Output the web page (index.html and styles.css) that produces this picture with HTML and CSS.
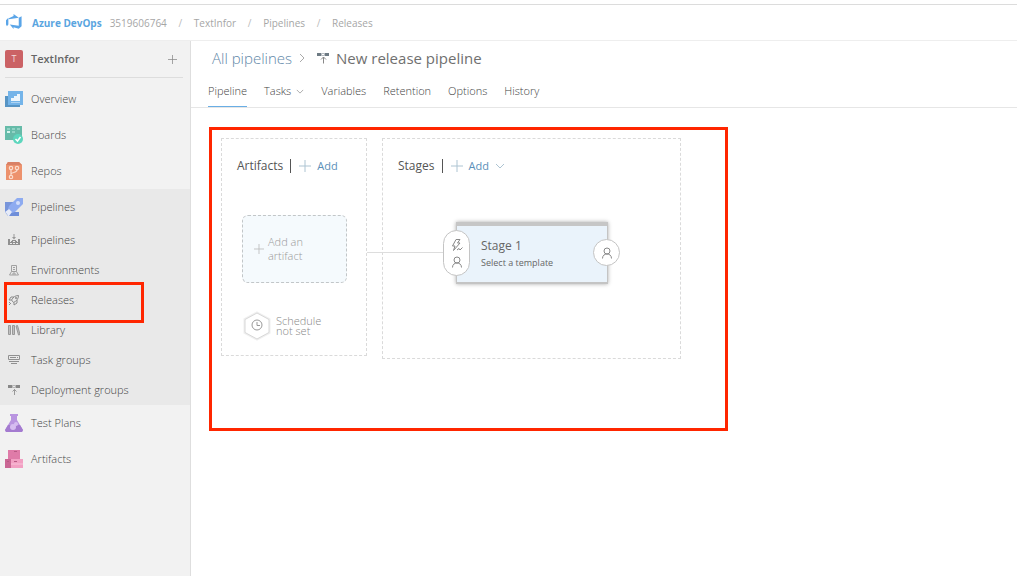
FILE: index.html
```html
<!DOCTYPE html>
<html lang="en">
<head>
<meta charset="utf-8">
<title>New release pipeline - Pipelines</title>
<link rel="stylesheet" href="styles.css">
</head>
<body>
<svg class="defs" aria-hidden="true">
  <symbol id="person" viewBox="0 0 12 12"><circle cx="6" cy="4" r="3"/><path d="M1.500 11.500C1.500 8.500 3.500 7 6 7s4.500 1.500 4.500 4.500"/></symbol>
  <symbol id="servers" viewBox="0 0 12 12"><path d="M0 1h4v3H0zM8 1h4v3H8z" fill="currentColor"/><path d="M4.500 1.500h3v2h-3z" fill="none" stroke="currentColor" stroke-opacity=".5"/></symbol>
  <symbol id="plus" viewBox="0 0 12 12"><path d="M6 0v12M0 6h12"/></symbol>
  <symbol id="chevron" viewBox="0 0 10 6"><path d="M1 1l4 4 4-4"/></symbol>
</svg>
<header class="topbar">
  <a class="brand" href="#">
    <svg class="logo" viewBox="0 0 18 18" aria-hidden="true"><path d="M0 6.500L2.500 4v7L1 13 0 11zM3 4.500L8 2V0l5.500 4L3 5.500zM13.500 4L16.500 2.500V13l-3 2.500L8 14v2l-4-4.800 9.500 1.300z" fill="#5aa5e8"/></svg>
    <span>Azure DevOps</span>
  </a>
  <nav class="crumbs" aria-label="Breadcrumb">
    <a href="#">3519606764</a><span class="slash">/</span>
    <a href="#">TextInfor</a><span class="slash">/</span>
    <a href="#">Pipelines</a><span class="slash">/</span>
    <a href="#">Releases</a>
  </nav>
</header>
<div class="shell">
  <aside class="sidebar">
    <div class="project">
      <span class="avatar">T</span>
      <span class="project-name">TextInfor</span>
      <button class="icon-button" type="button" aria-label="New"><svg class="line" width="9" height="9"><use href="#plus"/></svg></button>
    </div>
    <nav class="menu" aria-label="Project">
      <a class="item" href="#"><svg class="hub" viewBox="0 0 18 18"><path d="M0 6h3v9h12v2H0z" fill="#5794c4"/><path d="M3 1h15v14H3z" fill="#74b4e9"/><path d="M6 8h3v3H6zM9 6h3v5H9zM12 4h3v7h-3z" fill="#edf6fc"/><path d="M6 12h9v1H6z" fill="#aed4f3"/></svg>Overview</a>
      <a class="item" href="#"><svg class="hub" viewBox="0 0 18 18"><path d="M0 0h17v14H0z" fill="#66bba9"/><path d="M2 2h3v2H2zM7 2h3v2H7zM12 2h3v2h-3zM7 5h3v2H7z" fill="#91d3c5"/><path d="M2 5h3v2H2z" fill="#d5f4ed"/><circle cx="13" cy="13" r="5" fill="#5dd6bd"/><path d="M10.500 13l2 2 3-4" fill="none" stroke="#fff" stroke-width="1.500"/></svg>Boards</a>
      <a class="item" href="#"><svg class="hub" viewBox="0 0 18 18"><path d="M3 0h11l3 3v15H1V3z" fill="#ed926d"/><path d="M3 0h11l3 3H1z" fill="#d98166"/><g fill="none" stroke="#fbdccd" stroke-width="1.200"><circle cx="6" cy="6" r="1.700"/><circle cx="12" cy="6" r="1.700"/><circle cx="6" cy="15" r="1.700"/><path d="M6 8v5M12 8c0 3-5 2-6 4"/></g></svg>Repos</a>
      <div class="group">
        <a class="item" href="#"><svg class="hub" viewBox="0 0 18 18"><path d="M0 4h8v14H3l-3-4z" fill="#7895da"/><path d="M3 18l4-4h7v4z" fill="#6f8ed9"/><path d="M18 0h-6L4 8l-1 3 4 4 3-1 8-8z" fill="#8eabf0"/><circle cx="13" cy="5" r="2" fill="#d2defb"/><path d="M0 14l4-3 3 3-3 4H3l-1-2z" fill="#e6ebf8"/></svg>Pipelines</a>
        <a class="item sub" href="#"><svg class="glyph" viewBox="0 0 12 12"><path d="M5.500 0h1v3h1.500L6 5.500 4 3h1.500z" fill="#999"/><path d="M0 5h2v2h2V6h4v1h2V5h2v6H0z" fill="#909090"/><path d="M2 7h1v1H2zM5 7h2v1H5zM9 7h1v1H9zM2 9h2v1H2zM5 9h2v1H5zM8 9h2v1H8z" fill="#eaeaea"/></svg>Pipelines</a>
        <a class="item sub" href="#"><svg class="glyph" viewBox="0 0 12 12"><path d="M3.500 1.500h5v6h-5zM5 3.500h2M5 5.500h2M3.500 7.500L1.500 11h9l-2-3.500M5 11V9h2v2" fill="none" stroke="#a0a0a0"/></svg>Environments</a>
        <a class="item sub marked" href="#"><svg class="glyph" viewBox="0 0 12 12"><path d="M10.500 1.500C7 1.500 5.500 3 3.500 6l2 2.500c3-1.500 5-3.500 5-7zM6 3H3L1 6h2.500M9 6v3l-3 2V8.500M1 11l2-2M1 9l1-1" fill="none" stroke="#8a8a8a"/><circle cx="8" cy="4" r="1" fill="#8a8a8a"/></svg>Releases</a>
        <a class="item sub" href="#"><svg class="glyph" viewBox="0 0 12 12"><path d="M.5 1.500h2v9h-2zM4.500 1.500h2v9h-2zM8 2l1.500-.5 2.500 9-1.500.5z" fill="#c0c0c0" stroke="#999"/></svg>Library</a>
        <a class="item sub" href="#"><svg class="glyph" viewBox="0 0 12 12"><path d="M.5 1.500h11v4H.5z" fill="none" stroke="#909090"/><path d="M2 3.500h6M9 3.500h1M1 7.500h10M3 9.500h6" stroke="#909090"/></svg>Task groups</a>
        <a class="item sub" href="#"><svg class="glyph" viewBox="0 0 12 12" color="#888"><use href="#servers"/><path d="M6.500 5v6M4.500 7.500l2-2 2 2" fill="none" stroke="#999"/></svg>Deployment groups</a>
      </div>
      <a class="item" href="#"><svg class="hub" viewBox="0 0 18 18"><path d="M5 0h8v2h-1v4l6 10-1 2H1l-1-2L6 6V2H5z" fill="#b995e0"/><path d="M3 11h12l3 5-1 2H1l-1-2z" fill="#a47bd0"/><circle cx="8" cy="13" r="3" fill="#d6bdf0"/><circle cx="11" cy="10" r="2" fill="#d6bdf0"/></svg>Test Plans</a>
      <a class="item" href="#"><svg class="hub" viewBox="0 0 18 18"><path d="M3 0h12v9H3z" fill="#df7ba8"/><path d="M0 9h6v9H0z" fill="#ca6794"/><path d="M6 9h12v9H6z" fill="#f2a0c3"/><path d="M9 1h3v1H9zM2 11h2v1H2zM9 11h3v1H9z" fill="#b85b84"/><path d="M6 14h12" stroke="#f9c3da"/></svg>Artifacts</a>
    </nav>
  </aside>
  <main class="main">
    <div class="page-head">
      <h1 class="title">
        <a href="#">All pipelines</a>
        <svg class="sep" viewBox="0 0 6 10"><path d="M1 1l4 4-4 4"/></svg>
        <svg class="glyph" viewBox="0 0 12 12" color="#6d7a83"><use href="#servers"/><path d="M6.500 11.500V5M4 7.500L6.500 5 9 7.500" fill="none" stroke="#888"/></svg>
        <span>New release pipeline</span>
      </h1>
      <nav class="tabs" aria-label="Pipeline">
        <a class="tab active" href="#">Pipeline</a>
        <a class="tab" href="#">Tasks <svg class="line" width="8" height="5"><use href="#chevron"/></svg></a>
        <a class="tab" href="#">Variables</a>
        <a class="tab" href="#">Retention</a>
        <a class="tab" href="#">Options</a>
        <a class="tab" href="#">History</a>
      </nav>
    </div>
    <div class="canvas">
      <section class="panel artifacts">
        <div class="panel-head">
          <h2>Artifacts</h2>
          <button class="add" type="button"><svg class="line" width="12" height="12"><use href="#plus"/></svg>Add</button>
        </div>
        <button class="artifact-card" type="button"><svg class="line" width="10" height="10"><use href="#plus"/></svg><span>Add an artifact</span></button>
        <button class="schedule" type="button">
          <svg class="hexagon" viewBox="0 0 28 30"><path d="M14 2l12 6.500v13L14 28 2 21.500v-13z" fill="#fff" stroke="#f0f0f0" stroke-width="3"/><path d="M14 2l12 6.500v13L14 28 2 21.500v-13z" fill="#fff" stroke="#d8d8d8"/><circle cx="14" cy="14" r="5" fill="none" stroke="#999"/><path d="M14 11v3.500h3" fill="none" stroke="#999"/></svg>
          <span>Schedule not set</span>
        </button>
      </section>
      <section class="panel stages">
        <div class="panel-head">
          <h2>Stages</h2>
          <button class="add" type="button"><svg class="line" width="12" height="12"><use href="#plus"/></svg>Add <svg class="line" width="10" height="6"><use href="#chevron"/></svg></button>
        </div>
        <div class="connector"></div>
        <div class="stage">
          <strong>Stage 1</strong>
          <a href="#">Select a template</a>
          <button class="badge pre" type="button" aria-label="Pre-deployment conditions">
            <svg class="line" width="12" height="13" viewBox="0 0 12 13"><path d="M5 .5h4L6.500 4H9L2.500 11.500 4 7H1.500zM6 11l2-1.500 1 1.500 2.500-2.500"/></svg>
            <svg class="line" width="12" height="12"><use href="#person"/></svg>
          </button>
          <button class="badge post" type="button" aria-label="Post-deployment conditions"><svg class="line" width="12" height="12"><use href="#person"/></svg></button>
        </div>
      </section>
    </div>
  </main>
</div>
</body>
</html>
```
FILE: styles.css
```css
* { box-sizing: border-box; }
body {
  margin: 0;
  min-height: 100vh;
  display: flex;
  flex-direction: column;
  padding-top: 4px;
  background: #fff;
  color: #444;
  font: 300 11px/16px "Open Sans", "Noto Sans", sans-serif;
}
a { color: inherit; text-decoration: none; }
button {
  padding: 0;
  border: 0;
  background: none;
  color: inherit;
  font: inherit;
  text-align: left;
  cursor: pointer;
}
svg { flex: none; }
.defs { position: absolute; width: 0; height: 0; }
.line { fill: none; stroke: currentColor; }

.topbar {
  display: flex;
  align-items: center;
  gap: 8px;
  height: 37px;
  padding: 0 6px;
  border-top: 1px solid #dcdcdc;
  border-bottom: 1px solid #eee;
  font-size: 10px;
}
.brand {
  display: flex;
  align-items: center;
  gap: 9px;
  color: #5aa5e0;
  font-weight: 700;
}
.logo { width: 17px; height: 17px; }
.crumbs { display: flex; color: #a6a6a6; font-weight: 400; }
.slash { width: 27px; text-align: center; color: #bbb; }

.shell { display: flex; flex: 1; }
.sidebar {
  flex: none;
  width: 191px;
  background: #f2f2f2;
  border-right: 1px solid #dedede;
}
.project {
  display: flex;
  align-items: center;
  gap: 8px;
  height: 37px;
  margin: 0 7px 0 5px;
  padding-right: 6px;
  border-bottom: 1px solid #ddd;
}
.avatar {
  width: 18px;
  border-radius: 2px;
  background: #cb6265;
  color: #f4dcdc;
  font-size: 9px;
  font-weight: 400;
  line-height: 18px;
  text-align: center;
}
.project-name { flex: 1; color: #666; font-weight: 600; }
.icon-button { display: flex; color: #888; }
.menu { padding-top: 3px; }
.item {
  position: relative;
  display: flex;
  align-items: center;
  gap: 8px;
  height: 36px;
  padding-left: 5px;
}
.hub { width: 18px; height: 18px; }
.glyph { width: 12px; height: 12px; }
.group { background: #e9e9e9; }
.sub { height: 30px; gap: 11px; padding-left: 8px; }
.marked::after {
  content: "";
  position: absolute;
  inset: -3px 46px -8px 4px;
  border: 3px solid #ff2600;
  z-index: 1;
}

.main { flex: 1; min-width: 0; }
.page-head { border-bottom: 1px solid #e6e6e6; }
.title {
  display: flex;
  align-items: center;
  margin: 0;
  padding: 5px 21px 3px;
  color: #707070;
  font-size: 15px;
  font-weight: 400;
  line-height: 24px;
}
.title a { color: #5f88a8; font-weight: 300; }
.sep {
  width: 6px;
  height: 10px;
  margin: 0 12px 0 7px;
  fill: none;
  stroke: #aaa;
}
.title .glyph { margin-right: 7px; }
.tabs { display: flex; gap: 17px; padding: 0 17px; }
.tab {
  display: flex;
  align-items: center;
  gap: 5px;
  height: 34px;
  padding-top: 3px;
  border-bottom: 1px solid transparent;
}
.tab .line { color: #999; }
.active { border-color: #69aee5; }

.canvas {
  display: flex;
  align-items: flex-start;
  gap: 15px;
  width: 519px;
  min-height: 304px;
  margin: 19px 18px;
  padding: 8px 9px;
  border: 3px solid #ff2600;
}
.panel { border: 1px dashed #dadada; }
.artifacts { width: 146px; padding: 18px 15px 14px; }
.stages {
  position: relative;
  width: 299px;
  padding: 18px 15px 74px;
}
.panel-head { display: flex; align-items: center; height: 18px; }
.panel-head h2 {
  margin: 0;
  padding-right: 7px;
  border-right: 1px solid #555;
  font-size: 12px;
  font-weight: 400;
  line-height: 14px;
  color: #555;
}
.add {
  display: flex;
  align-items: center;
  gap: 6px;
  padding-left: 8px;
  color: #5b8fb9;
  font-weight: 400;
}
.add .line { color: #adc4d2; }
.artifact-card {
  display: flex;
  align-items: center;
  gap: 4px;
  width: 105px;
  height: 68px;
  margin: 40px 5px 28px;
  padding: 0 40px 0 11px;
  border: 1px dashed #c2c6c8;
  border-radius: 6px;
  background: #f5fafd;
  color: #999;
  line-height: 14px;
}
.artifact-card .line { color: #bbb; }
.schedule {
  display: flex;
  align-items: center;
  gap: 5px;
  width: 96px;
  margin-left: 6px;
  color: #888;
  line-height: 10px;
}
.hexagon { width: 28px; height: 30px; }
.connector {
  position: absolute;
  top: 113px;
  left: -16px;
  width: 90px;
  height: 1px;
  background: #ddd;
}
.stage {
  position: relative;
  display: flex;
  flex-direction: column;
  width: 152px;
  height: 62px;
  margin: 47px 0 0 58px;
  padding: 12px 24px 0;
  border: 1px solid #c4c4c4;
  border-top: 4px solid #c6c6c6;
  border-bottom-width: 2px;
  background: #eaf3fb;
  box-shadow: 0 0 4px #aaa;
  color: #666;
  font-weight: 400;
}
.stage strong { font-size: 12px; font-weight: 400; line-height: 16px; }
.stage a { font-size: 9px; line-height: 18px; white-space: nowrap; }
.badge {
  position: absolute;
  display: flex;
  flex-direction: column;
  align-items: center;
  justify-content: center;
  gap: 4px;
  width: 27px;
  border: 1px solid #c4c4c4;
  border-radius: 14px;
  background: #fff;
  color: #888;
}
.pre { top: 4px; left: -14px; height: 46px; }
.post { top: 13px; right: -13px; height: 27px; }
```
